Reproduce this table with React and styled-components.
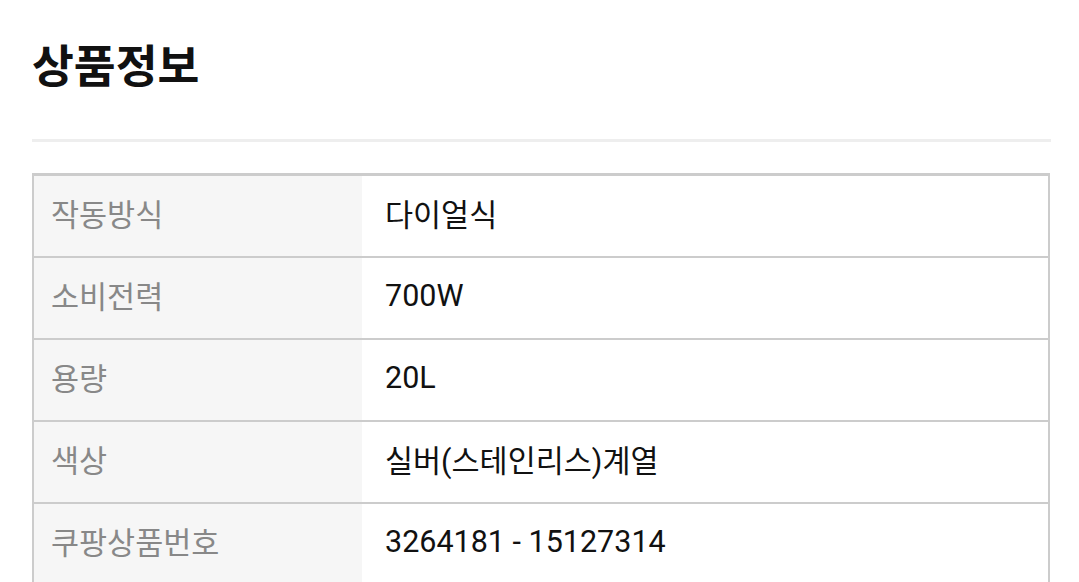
import React from "react";
import styled, { createGlobalStyle } from "styled-components";

const Global = createGlobalStyle`
  html, body { margin: 0; padding: 0; background: #fff; }
  body { font-family: Roboto, "Noto Sans CJK KR", sans-serif; }
`;

const Page = styled.div`
  padding: 46px 28px 0 32px;
`;

const Title = styled.h2`
  margin: 0;
  font-size: 45.5px;
  line-height: 44px;
  font-weight: 700;
  color: #111;
`;

const Divider = styled.div`
  height: 3px;
  background: #eeeeee;
  margin-top: 49px;
`;

const Table = styled.div`
  margin-top: 31px;
  margin-right: 1px;
  border-top: 3px solid #cccccc;
  border-left: 2px solid #cccccc;
  border-right: 2px solid #cccccc;
`;

const Row = styled.div`
  display: grid;
  grid-template-columns: 328px 1fr;
  height: 80px;
  border-bottom: 2px solid #cccccc;
`;

const Cell = styled.div`
  display: flex;
  align-items: center;
  box-sizing: border-box;
  padding-bottom: 6px;
  font-size: 30.5px;
`;

const Label = styled(Cell)`
  padding-left: 17px;
  background: #f6f6f6;
  color: #888888;
`;

const Value = styled(Cell)`
  padding-left: 23px;
  color: #111111;
`;

const rows = [
  ["작동방식", "다이얼식"],
  ["소비전력", "700W"],
  ["용량", "20L"],
  ["색상", "실버(스테인리스)계열"],
  ["쿠팡상품번호", "3264181 - 15127314"],
];

export default function App() {
  return (
    <>
      <Global />
      <Page>
        <Title>상품정보</Title>
        <Divider />
        <Table>
          {rows.map(([k, v]) => (
            <Row key={k}>
              <Label>{k}</Label>
              <Value>{v}</Value>
            </Row>
          ))}
        </Table>
      </Page>
    </>
  );
}
